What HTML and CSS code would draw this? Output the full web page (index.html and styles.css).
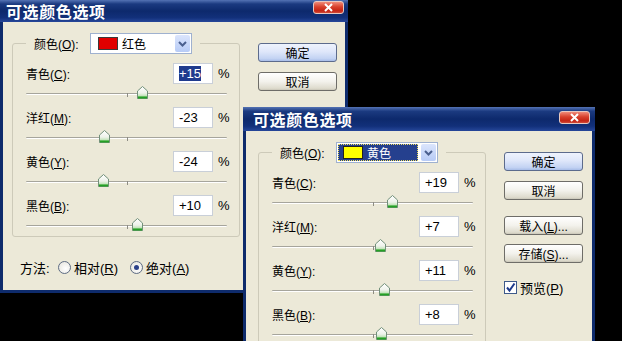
FILE: index.html
```html
<!DOCTYPE html>
<html lang="zh-CN">
<head>
  <meta charset="UTF-8">
  <title>可选颜色选项</title>
  <link rel="stylesheet" href="styles.css">
</head>
<body>
  <svg class="defs" width="0" height="0">
    <defs>
      <linearGradient id="thumbFill" x1="0" y1="0" x2="0" y2="1">
        <stop offset="0" stop-color="#ffffff"/>
        <stop offset="0.55" stop-color="#eef2ea"/>
        <stop offset="0.8" stop-color="#bfe3b6"/>
        <stop offset="1" stop-color="#3aa83a"/>
      </linearGradient>
    </defs>
  </svg>

  <!-- 红色 dialog (behind) -->
  <div class="dlg dlg1">
    <div class="titlebar">
      <span class="title">可选颜色选项</span>
      <span class="close"><svg width="11" height="9" viewBox="0 0 11 9"><path d="M2 1 L9 8 M9 1 L2 8" stroke="#fff" stroke-width="2"/></svg></span>
    </div>
    <div class="body">
      <div class="left-col">
        <fieldset class="group">
          <legend class="legend">
            <span class="lbl">颜色(<u>O</u>):</span>
            <span class="combo">
              <span class="combo-val"><span class="swatch red"></span>红色</span>
              <span class="combo-btn"><svg width="15" height="17" viewBox="0 0 15 17"><path d="M4 7 L7.5 10.5 L11 7" fill="none" stroke="#4a5f8e" stroke-width="2"/></svg></span>
            </span>
          </legend>
          <div class="row"><span class="lbl">青色(<u>C</u>):</span><span class="num"><span class="sel">+15</span></span><span class="pct">%</span></div>
          <div class="slider"><span class="track"></span><span class="tick"></span><svg class="thumb" style="left:111px" width="11" height="13" viewBox="0 0 11 13"><path d="M5.5 0.5 L10.5 5 V12.5 H0.5 V5 Z" fill="url(#thumbFill)" stroke="#72907a"/><path d="M1 11.5 H10" stroke="#25a025" stroke-width="2"/></svg></div>
          <div class="row"><span class="lbl">洋红(<u>M</u>):</span><span class="num">-23</span><span class="pct">%</span></div>
          <div class="slider"><span class="track"></span><span class="tick"></span><svg class="thumb" style="left:73px" width="11" height="13" viewBox="0 0 11 13"><path d="M5.5 0.5 L10.5 5 V12.5 H0.5 V5 Z" fill="url(#thumbFill)" stroke="#72907a"/><path d="M1 11.5 H10" stroke="#25a025" stroke-width="2"/></svg></div>
          <div class="row"><span class="lbl">黄色(<u>Y</u>):</span><span class="num">-24</span><span class="pct">%</span></div>
          <div class="slider"><span class="track"></span><span class="tick"></span><svg class="thumb" style="left:72px" width="11" height="13" viewBox="0 0 11 13"><path d="M5.5 0.5 L10.5 5 V12.5 H0.5 V5 Z" fill="url(#thumbFill)" stroke="#72907a"/><path d="M1 11.5 H10" stroke="#25a025" stroke-width="2"/></svg></div>
          <div class="row"><span class="lbl">黑色(<u>B</u>):</span><span class="num">+10</span><span class="pct">%</span></div>
          <div class="slider"><span class="track"></span><span class="tick"></span><svg class="thumb" style="left:106px" width="11" height="13" viewBox="0 0 11 13"><path d="M5.5 0.5 L10.5 5 V12.5 H0.5 V5 Z" fill="url(#thumbFill)" stroke="#72907a"/><path d="M1 11.5 H10" stroke="#25a025" stroke-width="2"/></svg></div>
        </fieldset>
        <div class="method">
          <span class="m-lbl">方法:</span>
          <span class="radio"></span><span class="r-txt">相对(<u>R</u>)</span>
          <span class="radio on"></span><span class="r-txt">绝对(<u>A</u>)</span>
        </div>
      </div>
      <div class="right-col">
        <span class="btn default">确定</span>
        <span class="btn">取消</span>
      </div>
    </div>
  </div>

  <!-- 黄色 dialog (front) -->
  <div class="dlg dlg2">
    <div class="titlebar">
      <span class="title">可选颜色选项</span>
      <span class="close"><svg width="11" height="9" viewBox="0 0 11 9"><path d="M2 1 L9 8 M9 1 L2 8" stroke="#fff" stroke-width="2"/></svg></span>
    </div>
    <div class="body">
      <div class="left-col">
        <fieldset class="group">
          <legend class="legend">
            <span class="lbl">颜色(<u>O</u>):</span>
            <span class="combo focus">
              <span class="combo-val"><span class="swatch yellow"></span>黄色</span>
              <span class="combo-btn"><svg width="15" height="17" viewBox="0 0 15 17"><path d="M4 7 L7.5 10.5 L11 7" fill="none" stroke="#4a5f8e" stroke-width="2"/></svg></span>
            </span>
          </legend>
          <div class="row"><span class="lbl">青色(<u>C</u>):</span><span class="num">+19</span><span class="pct">%</span></div>
          <div class="slider"><span class="track"></span><span class="tick"></span><svg class="thumb" style="left:115px" width="11" height="13" viewBox="0 0 11 13"><path d="M5.5 0.5 L10.5 5 V12.5 H0.5 V5 Z" fill="url(#thumbFill)" stroke="#72907a"/><path d="M1 11.5 H10" stroke="#25a025" stroke-width="2"/></svg></div>
          <div class="row"><span class="lbl">洋红(<u>M</u>):</span><span class="num">+7</span><span class="pct">%</span></div>
          <div class="slider"><span class="track"></span><span class="tick"></span><svg class="thumb" style="left:103px" width="11" height="13" viewBox="0 0 11 13"><path d="M5.5 0.5 L10.5 5 V12.5 H0.5 V5 Z" fill="url(#thumbFill)" stroke="#72907a"/><path d="M1 11.5 H10" stroke="#25a025" stroke-width="2"/></svg></div>
          <div class="row"><span class="lbl">黄色(<u>Y</u>):</span><span class="num">+11</span><span class="pct">%</span></div>
          <div class="slider"><span class="track"></span><span class="tick"></span><svg class="thumb" style="left:107px" width="11" height="13" viewBox="0 0 11 13"><path d="M5.5 0.5 L10.5 5 V12.5 H0.5 V5 Z" fill="url(#thumbFill)" stroke="#72907a"/><path d="M1 11.5 H10" stroke="#25a025" stroke-width="2"/></svg></div>
          <div class="row"><span class="lbl">黑色(<u>B</u>):</span><span class="num">+8</span><span class="pct">%</span></div>
          <div class="slider"><span class="track"></span><span class="tick"></span><svg class="thumb" style="left:104px" width="11" height="13" viewBox="0 0 11 13"><path d="M5.5 0.5 L10.5 5 V12.5 H0.5 V5 Z" fill="url(#thumbFill)" stroke="#72907a"/><path d="M1 11.5 H10" stroke="#25a025" stroke-width="2"/></svg></div>
        </fieldset>
      </div>
      <div class="right-col">
        <span class="btn default">确定</span>
        <span class="btn">取消</span>
        <span class="btn gap"><span>载入(<u>L</u>)...</span></span>
        <span class="btn"><span>存储(<u>S</u>)...</span></span>
        <span class="check-row"><span class="checkbox"><svg width="13" height="13" viewBox="0 0 13 13"><path d="M3 6.5 L5.5 9.5 L10.5 2.5" fill="none" stroke="#1d3a8c" stroke-width="2"/></svg></span><span>预览(<u>P</u>)</span></span>
      </div>
    </div>
  </div>
</body>
</html>
```

FILE: styles.css
```css
body {
  margin: 0;
  background: #000;
  font-family: "Liberation Sans", "Noto Sans CJK SC", sans-serif;
  font-size: 12px;
  color: #000;
  overflow: hidden;
  height: 341px;
}
.defs {
  position: absolute;
}
u {
  text-decoration: underline;
  text-underline-offset: 1px;
}

/* window frame */
.dlg {
  position: absolute;
  box-sizing: border-box;
  background: #0e2b6c;
  padding: 0 3px 3px 3px;
  display: flex;
  flex-direction: column;
}
.dlg1 {
  left: 0;
  top: 0;
  width: 348px;
  height: 293px;
}
.dlg2 {
  left: 243px;
  top: 107px;
  width: 352px;
  height: 234px;
  padding-bottom: 0;
  overflow: hidden;
}
.titlebar {
  margin: 0 -3px;
  height: 22px;
  flex-shrink: 0;
  display: flex;
  align-items: center;
  justify-content: space-between;
  padding: 0 4px 0 6px;
  background: linear-gradient(#5473b4 0%, #1b3a80 18%, #0d296c 50%, #12307a 80%, #26479a 100%);
}
.dlg2 .titlebar {
  height: 24px;
  padding: 0 5px 0 10px;
}
.title {
  color: #fff;
  font-family: "Noto Sans CJK SC", sans-serif;
  font-weight: bold;
  font-size: 16px;
  letter-spacing: 0.6px;
  line-height: 16px;
}
.close {
  align-self: flex-start;
  margin-top: 1px;
  width: 31px;
  height: 13px;
  box-sizing: border-box;
  border: 1px solid #e8c8c0;
  border-radius: 3px;
  background: linear-gradient(#f08a78 0%, #d8402c 45%, #c42414 80%, #d24a38 100%);
  display: flex;
  align-items: center;
  justify-content: center;
}
.dlg2 .close {
  margin-top: 4px;
}

/* dialog body */
.body {
  flex: 1;
  min-height: 0;
  background: #ece9d8;
  display: flex;
  padding: 11px 0 0 9px;
}
.dlg2 .body {
  padding-left: 12px;
}
.left-col {
  width: 228px;
}
.group {
  margin: 0;
  box-sizing: border-box;
  width: 228px;
  padding: 0 10px 0 13px;
  border: 1px solid #cdcab9;
  border-radius: 3px;
}
.legend {
  padding: 0 8px;
  display: flex;
  align-items: center;
  gap: 8px;
}
.legend .lbl {
  width: 48px;
}
.combo {
  width: 102px;
  height: 21px;
  box-sizing: border-box;
  border: 1px solid #9fb1cf;
  background: #fff;
  display: flex;
  align-items: center;
  padding: 1px;
}
.combo-val {
  flex: 1;
  height: 17px;
  display: flex;
  align-items: center;
  gap: 4px;
  padding-left: 6px;
  box-sizing: border-box;
}
.combo.focus .combo-val {
  background: #25408e;
  color: #fff;
  outline: 1px dotted #f0e060;
  outline-offset: -1px;
  margin-right: 3px;
  padding-left: 5px;
}
.swatch {
  width: 18px;
  height: 11px;
  border: 1px solid #3a3a3a;
}
.swatch.red {
  background: #e10000;
}
.swatch.yellow {
  background: #ffff00;
  border-color: #222;
}
.combo-btn {
  width: 15px;
  height: 17px;
  border-radius: 2px;
  background: linear-gradient(#dbe5fc, #b7cbf6);
  display: flex;
}

.row {
  height: 21px;
  display: flex;
  align-items: center;
}
.legend + .row {
  margin-top: 9px;
}
.row .lbl {
  flex: 1;
}
.num {
  width: 40px;
  height: 21px;
  box-sizing: border-box;
  border: 1px solid #c9cfd8;
  background: #fff;
  font-size: 13px;
  padding-left: 5px;
  display: flex;
  align-items: center;
}
.sel {
  background: #1f3b8e;
  color: #fff;
  line-height: 15px;
}
.pct {
  width: 11px;
  margin-left: 5px;
  font-size: 13px;
}

/* trackbar */
.slider {
  position: relative;
  height: 23px;
}
.slider:last-child {
  height: 20px;
}
.track {
  position: absolute;
  left: 0;
  top: 9px;
  width: 201px;
  height: 1px;
  background: #a6a59c;
  border-bottom: 1px solid #fff;
  border-radius: 1px;
}
.tick {
  position: absolute;
  left: 101px;
  top: 9px;
  width: 1px;
  height: 4px;
  background: #8d8c84;
}
.thumb {
  position: absolute;
  top: 2px;
}

/* method */
.method {
  margin-top: 20px;
  height: 20px;
  padding-left: 8px;
  display: flex;
  align-items: center;
  font-size: 13px;
}
.m-lbl {
  width: 38px;
}
.radio {
  width: 13px;
  height: 13px;
  box-sizing: border-box;
  border: 1px solid #5e6c84;
  border-radius: 50%;
  background: radial-gradient(circle at 60% 60%, #fff 0%, #e4e2da 100%);
  display: flex;
  align-items: center;
  justify-content: center;
  margin-right: 3px;
}
.radio.on::after {
  content: "";
  width: 5px;
  height: 5px;
  border-radius: 50%;
  background: #2c4189;
}
.r-txt {
  margin-right: 12px;
}

/* buttons */
.right-col {
  margin-left: 18px;
  width: 79px;
  display: flex;
  flex-direction: column;
  padding-top: 10px;
}
.btn {
  height: 19px;
  box-sizing: border-box;
  border: 1px solid #6e6d68;
  border-radius: 3px;
  background: linear-gradient(#ffffff 0%, #f3f2ec 50%, #dedbcd 90%, #c9c6b8 100%);
  display: flex;
  align-items: center;
  justify-content: center;
  margin-bottom: 10px;
}
.btn.default {
  border-color: #5c6b8c;
  background: linear-gradient(#eef3fd 0%, #dfe7fa 45%, #c3d3f3 85%, #a8bde8 100%);
}
.btn.gap {
  margin-top: 6px;
  margin-bottom: 9px;
}
.check-row {
  margin-top: 5px;
  display: flex;
  align-items: center;
  gap: 3px;
  font-size: 13px;
}
.checkbox {
  width: 13px;
  height: 13px;
  box-sizing: border-box;
  border: 1px solid #3e5a8a;
  background: #fff;
  display: flex;
}
.checkbox svg {
  margin: -1px;
}
```
